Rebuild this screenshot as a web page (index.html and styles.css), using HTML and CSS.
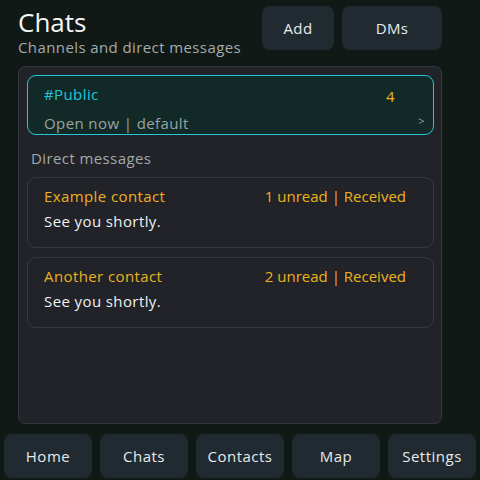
FILE: index.html
```html
<!DOCTYPE html>
<html>
<head>
<meta charset="utf-8">
<link rel="stylesheet" href="styles.css">
</head>
<body>
<div class="app">
  <header class="top">
    <div class="titles">
      <h1 class="title">Chats</h1>
      <div class="subtitle">Channels and direct messages</div>
    </div>
    <div class="actions">
      <button class="btn btn-add">Add</button>
      <button class="btn btn-dms">DMs</button>
    </div>
  </header>
  <main class="panel">
    <div class="channel">
      <div class="row">
        <span class="channel-name">#Public</span>
        <span class="count">4</span>
      </div>
      <div class="row row-bottom">
        <span class="channel-meta">Open now | default</span>
        <span class="chev">&gt;</span>
      </div>
    </div>
    <div class="section-label">Direct messages</div>
    <div class="dm">
      <div class="row">
        <span class="dm-name">Example contact</span>
        <span class="dm-status">1 unread | Received</span>
      </div>
      <div class="dm-msg">See you shortly.</div>
    </div>
    <div class="dm">
      <div class="row">
        <span class="dm-name">Another contact</span>
        <span class="dm-status">2 unread | Received</span>
      </div>
      <div class="dm-msg">See you shortly.</div>
    </div>
  </main>
  <nav class="nav">
    <button class="nav-btn">Home</button>
    <button class="nav-btn">Chats</button>
    <button class="nav-btn">Contacts</button>
    <button class="nav-btn">Map</button>
    <button class="nav-btn">Settings</button>
  </nav>
</div>
</body>
</html>
```
FILE: styles.css
```css
* { box-sizing: border-box; }
html, body { margin: 0; padding: 0; }
body {
  background: #111917;
  font-family: "Open Sans", "Noto Sans", sans-serif;
  color: #e8ecec;
  width: 480px;
  height: 480px;
  overflow: hidden;
  letter-spacing: 0.4px;
}
.app {
  display: flex;
  flex-direction: column;
  height: 480px;
}
.top {
  display: flex;
  justify-content: space-between;
  padding: 6px 38px 0 18px;
  height: 50px;
}
.title {
  margin: 0;
  font-size: 26px;
  font-weight: 500;
  line-height: 32px;
  color: #f4f6f6;
  letter-spacing: 0;
}
.subtitle {
  font-size: 15px;
  line-height: 18px;
  color: #a3abab;
  margin-top: 0;
}
.actions {
  display: flex;
  gap: 8px;
}
.btn {
  height: 44px;
  border: none;
  border-radius: 8px;
  background: #222a31;
  color: #e6eaea;
  font-family: inherit;
  font-size: 15px;
  letter-spacing: 0.4px;
}
.btn-add { width: 72px; }
.btn-dms { width: 100px; }
.panel {
  margin: 16px 38px 0 18px;
  height: 358px;
  background: #212329;
  border: 1px solid #32363e;
  border-radius: 7px;
  padding: 8px 7px 8px 8px;
  display: flex;
  flex-direction: column;
}
.channel {
  height: 60px;
  background: #112a28;
  border: 1px solid #25c7d8;
  border-radius: 9px;
  padding: 6px 8px 0 16px;
}
.row {
  display: flex;
  justify-content: space-between;
  align-items: center;
}
.channel-name {
  color: #25c5d6;
  font-size: 15px;
  line-height: 20px;
}
.count {
  color: #f0b41e;
  font-size: 15px;
  line-height: 20px;
  margin-right: 30px;
  margin-top: 4px;
}
.row-bottom { margin-top: 7px; }
.channel-meta {
  color: #9aa4a2;
  font-size: 15px;
  line-height: 20px;
}
.chev {
  color: #9aa4a2;
  font-size: 11px;
  margin-top: -6px;
}
.section-label {
  color: #a2aaaa;
  font-size: 15px;
  line-height: 20px;
  padding: 13px 0 0 4px;
  height: 42px;
}
.dm {
  height: 71px;
  border: 1px solid #323b45;
  border-radius: 9px;
  padding: 8px 27px 0 16px;
  margin-bottom: 9px;
}
.dm-name {
  color: #ecb21e;
  font-size: 15px;
  line-height: 20px;
}
.dm-status {
  color: #ecb21e;
  font-size: 15px;
  line-height: 20px;
  letter-spacing: 0;
}
.dm-msg {
  color: #eef0f0;
  font-size: 15px;
  line-height: 20px;
  margin-top: 5px;
}
.nav {
  margin-top: 10px;
  display: flex;
  gap: 8px;
  padding: 0 4px;
}
.nav-btn {
  width: 88px;
  height: 44px;
  border: none;
  border-radius: 8px;
  background: #202a30;
  color: #e6eaea;
  font-family: inherit;
  font-size: 15px;
  letter-spacing: 0.5px;
  padding-bottom: 2px;
}
```
